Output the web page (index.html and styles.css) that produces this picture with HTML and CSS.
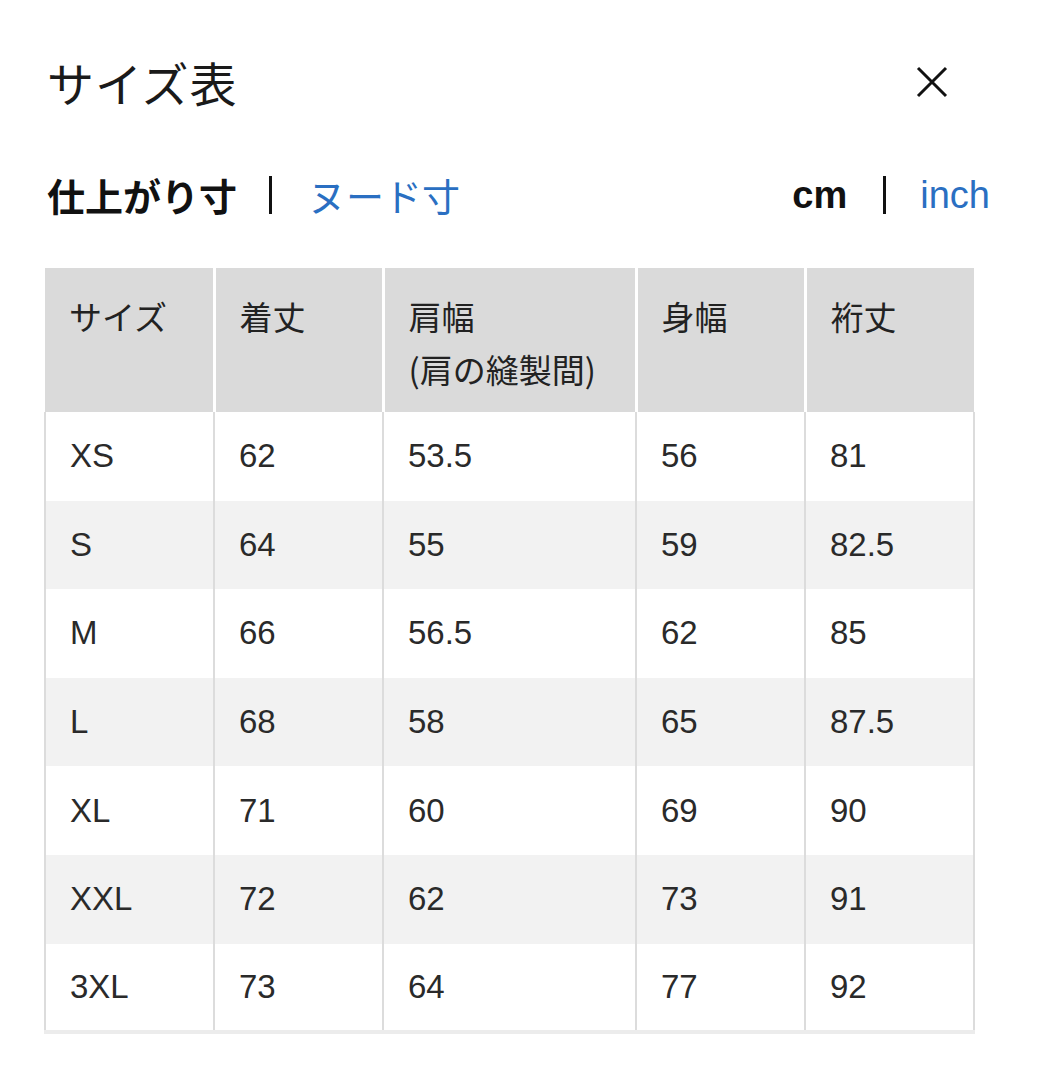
FILE: index.html
```html
<!DOCTYPE html>
<html lang="ja">
<head>
<meta charset="utf-8">
<title>サイズ表</title>
<link rel="stylesheet" href="styles.css">
</head>
<body>
<div class="page">
  <div class="title-row">
    <h1 class="title">サイズ表</h1>
    <svg class="close" width="32" height="32" viewBox="0 0 32 32"><path d="M2 2 L30 30 M30 2 L2 30" stroke="#111" stroke-width="3" fill="none"/></svg>
  </div>
  <div class="tabs-row">
    <div class="tabs">
      <span class="tab active">仕上がり寸</span>
      <span class="sep"></span>
      <span class="tab link">ヌード寸</span>
    </div>
    <div class="tabs units">
      <span class="tab active latin">cm</span>
      <span class="sep"></span>
      <span class="tab link latin">inch</span>
    </div>
  </div>
  <table class="size-table">
    <colgroup>
      <col class="c1"><col class="c2"><col class="c3"><col class="c4"><col class="c5">
    </colgroup>
    <thead>
      <tr><th>サイズ</th><th>着丈</th><th>肩幅<br>(肩の縫製間)</th><th>身幅</th><th>裄丈</th></tr>
    </thead>
    <tbody>
      <tr><td>XS</td><td>62</td><td>53.5</td><td>56</td><td>81</td></tr>
      <tr><td>S</td><td>64</td><td>55</td><td>59</td><td>82.5</td></tr>
      <tr><td>M</td><td>66</td><td>56.5</td><td>62</td><td>85</td></tr>
      <tr><td>L</td><td>68</td><td>58</td><td>65</td><td>87.5</td></tr>
      <tr><td>XL</td><td>71</td><td>60</td><td>69</td><td>90</td></tr>
      <tr><td>XXL</td><td>72</td><td>62</td><td>73</td><td>91</td></tr>
      <tr><td>3XL</td><td>73</td><td>64</td><td>77</td><td>92</td></tr>
    </tbody>
  </table>
</div>
</body>
</html>
```

FILE: styles.css
```css
html, body {
  margin: 0;
  padding: 0;
  background: #fff;
}
body {
  font-family: "Liberation Sans", "Noto Sans CJK JP", sans-serif;
  color: #1a1a1a;
}
.page {
  padding: 52px 48px 0 44px;
}
.title-row {
  display: flex;
  justify-content: space-between;
  align-items: center;
  padding-left: 3px;
  padding-right: 42px;
  height: 60px;
}
.title {
  margin: 0;
  font-family: "Noto Sans CJK JP", sans-serif;
  font-weight: 400;
  font-size: 47px;
  line-height: 60px;
  letter-spacing: 1px;
}
.close {
  display: block;
}
.tabs-row {
  display: flex;
  justify-content: space-between;
  align-items: center;
  margin-top: 51px;
  height: 64px;
  padding-left: 3px;
}
.tabs {
  display: flex;
  align-items: center;
}
.tab {
  font-family: "Noto Sans CJK JP", sans-serif;
  font-size: 38px;
  line-height: 48px;
}
.tab.latin {
  font-family: "Liberation Sans", sans-serif;
  font-size: 38px;
}
.tab.active {
  font-weight: 700;
  color: #111;
}
.tab.link {
  color: #2a6fc2;
  font-weight: 400;
}
.sep {
  width: 3px;
  height: 38px;
  background: #111;
  margin: 0 36px 0 32px;
}
.units .sep {
  margin: 0 34px 0 36px;
}
.size-table {
  margin-top: 41px;
  border-collapse: collapse;
  width: 930px;
  table-layout: fixed;
  font-size: 33px;
  border-bottom: 4px solid #ececec;
}
.c1, .c2, .c4, .c5 { width: 169px; }
.c3 { width: 253px; }
th {
  background: #dadada;
  font-family: "Noto Sans CJK JP", sans-serif;
  font-weight: 400;
  text-align: left;
  vertical-align: top;
  padding: 22px 20px 0 24px;
  height: 122px;
  line-height: 53px;
  border-right: 3px solid #fff;
  color: #222;
}
th:last-child {
  border-right: 0;
}
td {
  height: 88.6px;
  padding: 0 20px 0 24px;
  border-left: 2px solid #dcdcdc;
  border-right: 2px solid #dcdcdc;
  color: #2a2a2a;
  font-weight: 400;
  box-sizing: border-box;
}
tbody tr:nth-child(even) td {
  background: #f2f2f2;
}
```
